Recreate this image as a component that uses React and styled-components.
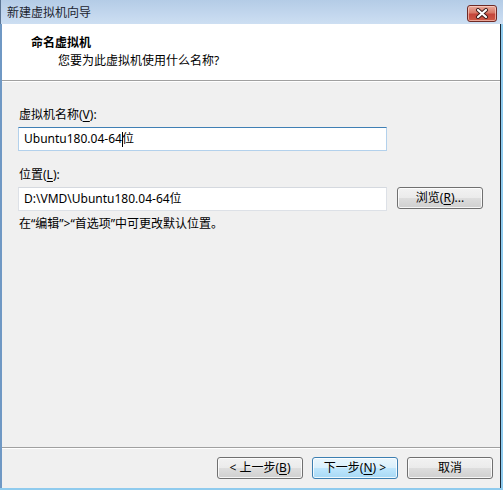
import React from "react";
import styled, { createGlobalStyle } from "styled-components";

const Global = createGlobalStyle`
  html, body {
    margin: 0;
    padding: 0;
    background: #ffffff;
  }
  body {
    font-family: "Noto Sans", "Noto Sans CJK SC", sans-serif;
    font-size: 12px;
    color: #000;
  }
`;

const Frame = styled.div`
  width: 503px;
  height: 490px;
  display: flex;
  flex-direction: column;
  background: #8fcbee;
  box-sizing: border-box;
  overflow: hidden;
`;

const TitleBar = styled.div`
  height: 24px;
  flex: none;
  display: flex;
  align-items: center;
  justify-content: space-between;
  padding: 0 6px 0 6px;
  background: linear-gradient(to bottom, #b4cce6 0%, #c3d7ee 60%, #cddff2 100%);
  border-left: 1px solid #5b7594;
  box-sizing: border-box;
`;

const Title = styled.span`
  line-height: 16px;
  color: #1c2430;
  margin-top: 2px;
`;

const CloseButton = styled.div`
  width: 30px;
  height: 17px;
  margin-top: 3px;
  box-sizing: border-box;
  border: 1px solid #6e2a26;
  border-radius: 3px;
  background: linear-gradient(to bottom, #e9a99b 0%, #d87866 45%, #c4453a 55%, #cf5a45 100%);
  box-shadow: inset 0 0 0 1px rgba(255, 220, 210, 0.6);
  display: flex;
  align-items: center;
  justify-content: center;
`;

const Client = styled.div`
  flex: 1;
  display: flex;
  flex-direction: column;
  margin: 0 2px 2px 0;
  border-left: 2px solid #6f98c4;
  border-right: 1px solid #1c2a38;
  background: #f0f0f0;
  min-height: 0;
`;

const Header = styled.div`
  height: 57px;
  flex: none;
  background: #ffffff;
  border-bottom: 1px solid #a0a0a0;
  box-shadow: 0 1px 0 #ffffff;
  padding: 11px 0 0 29px;
  box-sizing: border-box;
`;

const HeaderTitle = styled.div`
  font-weight: bold;
  line-height: 16px;
`;

const HeaderSub = styled.div`
  line-height: 16px;
  margin-top: 2px;
  padding-left: 27px;
`;

const Body = styled.div`
  flex: 1;
  padding: 26px 0 0 16px;
`;

const Label = styled.div`
  line-height: 16px;
  padding-left: 1px;
  margin-bottom: 4px;
  margin-top: ${(p) => (p.$first ? "0" : "16px")};
`;

const Key = styled.span`
  text-decoration: underline;
  text-underline-offset: 2px;
`;

const Row = styled.div`
  display: flex;
  gap: 10px;
  align-items: flex-start;
`;

const TextBox = styled.div`
  width: 369px;
  height: 24px;
  box-sizing: border-box;
  background: #ffffff;
  border: 1px solid ${(p) => (p.$focused ? "#b3d1ec" : "#dde1e7")};
  border-top-color: ${(p) => (p.$focused ? "#3f7fb4" : "#d5d9df")};
  padding: 0 5px;
  display: flex;
  align-items: center;
  line-height: 16px;
  white-space: nowrap;
`;

const Caret = styled.span`
  display: inline-block;
  width: 1px;
  height: 15px;
  background: #000;
  vertical-align: middle;
  margin: 0 -1px 0 0;
`;

const Button = styled.div`
  width: 86px;
  height: 22px;
  box-sizing: border-box;
  border: 1px solid ${(p) => (p.$focused ? "#3c7fb1" : "#707070")};
  border-radius: 3px;
  background: ${(p) =>
    p.$focused
      ? "linear-gradient(to bottom, #eaf6fd 0%, #d9f0fc 48%, #bee6fd 52%, #a7d9f5 100%)"
      : "linear-gradient(to bottom, #f2f2f2 0%, #ebebeb 48%, #dddddd 52%, #cfcfcf 100%)"};
  box-shadow: inset 0 0 0 1px rgba(255, 255, 255, 0.8);
  display: flex;
  align-items: center;
  justify-content: center;
  line-height: 16px;
  white-space: nowrap;
`;

const Hint = styled.div`
  line-height: 16px;
  margin-top: 5px;
  padding-left: 1px;
`;

const Footer = styled.div`
  flex: none;
  height: 41px;
  border-top: 1px solid #a0a0a0;
  box-shadow: inset 0 1px 0 #ffffff;
  display: flex;
  justify-content: flex-end;
  gap: 9px;
  padding: 9px 7px 0 0;
  box-sizing: border-box;
`;

export default function App() {
  return (
    <>
      <Global />
      <Frame>
        <TitleBar>
          <Title>新建虚拟机向导</Title>
          <CloseButton>
            <svg width="14" height="11" viewBox="0 0 14 11">
              <path d="M3 2 L11 9 M11 2 L3 9" stroke="#3a1a18" strokeWidth="4" strokeLinecap="round" />
              <path d="M3 2 L11 9 M11 2 L3 9" stroke="#ffffff" strokeWidth="2.2" strokeLinecap="round" />
            </svg>
          </CloseButton>
        </TitleBar>
        <Client>
          <Header>
            <HeaderTitle>命名虚拟机</HeaderTitle>
            <HeaderSub>您要为此虚拟机使用什么名称?</HeaderSub>
          </Header>
          <Body>
            <Label $first>
              虚拟机名称(<Key>V</Key>):
            </Label>
            <TextBox $focused>
              Ubuntu180.04-64<Caret />位
            </TextBox>
            <Label>
              位置(<Key>L</Key>):
            </Label>
            <Row>
              <TextBox>D:\VMD\Ubuntu180.04-64位</TextBox>
              <Button>
                浏览(<Key>R</Key>)...
              </Button>
            </Row>
            <Hint>在“编辑”&gt;“首选项”中可更改默认位置。</Hint>
          </Body>
          <Footer>
            <Button>
              &lt; 上一步(<Key>B</Key>)
            </Button>
            <Button $focused>
              下一步(<Key>N</Key>) &gt;
            </Button>
            <Button>取消</Button>
          </Footer>
        </Client>
      </Frame>
    </>
  );
}
